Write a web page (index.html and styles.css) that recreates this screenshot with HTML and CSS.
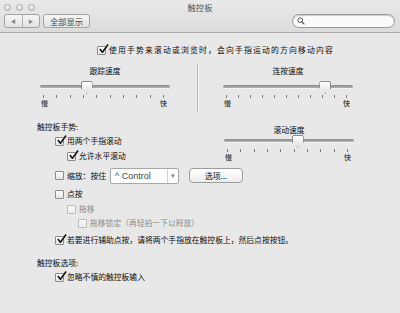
FILE: index.html
```html
<!DOCTYPE html>
<html lang="zh-CN">
<head>
<meta charset="UTF-8" />
<title>触控板</title>
<link rel="stylesheet" href="styles.css">
</head>
<body>

<div class="window">
  <!-- Title bar + toolbar -->
  <div class="titlebar">
    <div class="title-row">
      <div class="lights"><span></span><span></span><span></span></div>
      <div class="title">触控板</div>
      <div></div>
    </div>
    <div class="toolbar">
      <div class="seg">
        <span class="seg-btn">&#9664;</span>
        <span class="seg-btn">&#9654;</span>
      </div>
      <div class="tbtn">全部显示</div>
      <div class="search">
        <svg width="8" height="8" viewBox="0 0 8 8"><circle cx="3.2" cy="3.2" r="2.4" fill="none" stroke="#555" stroke-width="1"/><path d="M5 5 L7.4 7.4" stroke="#555" stroke-width="1.3"/></svg>
      </div>
    </div>
  </div>

  <div class="content">
    <div class="check top-check">
      <span class="box on"><svg viewBox="0 0 12 12"><path d="M2 5.5 L4.8 9 L11 0.5"/></svg></span>
      使用手势来滚动或浏览时，会向手指运动的方向移动内容
    </div>

    <!-- Speed sliders -->
    <div class="speeds">
      <div class="slider-col">
        <div class="slider-title">跟踪速度</div>
        <div class="track"><span class="thumb" style="left: 35%"></span></div>
        <div class="ticks"><i></i><i></i><i></i><i></i><i></i><i></i><i></i><i></i><i></i><i></i></div>
        <div class="ends"><span>慢</span><span>快</span></div>
      </div>
      <div class="divider"></div>
      <div class="slider-col">
        <div class="slider-title">连按速度</div>
        <div class="track"><span class="thumb" style="left: 78%"></span></div>
        <div class="ticks"><i></i><i></i><i></i><i></i><i></i><i></i><i></i><i></i><i></i><i></i><i></i></div>
        <div class="ends"><span>慢</span><span>快</span></div>
      </div>
    </div>

    <!-- Gestures -->
    <div class="gestures">
      <div class="g-left">
        <div class="heading">触控板手势:</div>
        <div class="check lvl1 first">
          <span class="box on"><svg viewBox="0 0 12 12"><path d="M2 5.5 L4.8 9 L11 0.5"/></svg></span>
          用两个手指滚动
        </div>
        <div class="check lvl2 next">
          <span class="box on"><svg viewBox="0 0 12 12"><path d="M2 5.5 L4.8 9 L11 0.5"/></svg></span>
          允许水平滚动
        </div>
      </div>
      <div class="slider-col compact">
        <div class="slider-title">滚动速度</div>
        <div class="track"><span class="thumb" style="left: 56%"></span></div>
        <div class="ticks"><i></i><i></i><i></i><i></i><i></i><i></i><i></i><i></i><i></i><i></i></div>
        <div class="ends"><span>慢</span><span>快</span></div>
      </div>
    </div>

    <div class="zoom-row">
      <div class="check lvl1">
        <span class="box"></span>
        缩放：按住
      </div>
      <div class="popup">
        <span class="popup-text">^ Control</span>
        <span class="popup-arrow">&#9662;</span>
      </div>
      <div class="btn">选项...</div>
    </div>

    <div class="check lvl1 row-click">
      <span class="box"></span>
      点按
    </div>
    <div class="check lvl2 off row-drag">
      <span class="box"></span>
      拖移
    </div>
    <div class="check lvl3 off row-lock">
      <span class="box"></span>
      拖移锁定（再轻拍一下以释放）
    </div>
    <div class="check lvl1 row-second">
      <span class="box on"><svg viewBox="0 0 12 12"><path d="M2 5.5 L4.8 9 L11 0.5"/></svg></span>
      若要进行辅助点按，请将两个手指放在触控板上，然后点按按钮。
    </div>

    <div class="heading options-heading">触控板选项:</div>
    <div class="check lvl1 row-ignore">
      <span class="box on"><svg viewBox="0 0 12 12"><path d="M2 5.5 L4.8 9 L11 0.5"/></svg></span>
      忽略不慎的触控板输入
    </div>
  </div>
</div>

</body>
</html>
```

FILE: styles.css
```css
body {
  margin: 0;
  padding: 0;
  font-family: "Noto Sans CJK SC", "Liberation Sans", sans-serif;
  font-size: 7.8px;
  color: #0c0c0c;
  background: #e8e8e8;
}
.window {
  width: 400px;
  height: 313px;
  overflow: hidden;
  background: #e8e8e8;
}

/* Title bar */
.titlebar {
  height: 32px;
  background: linear-gradient(#e9e9e9, #dcdcdc);
  border-bottom: 1px solid #a6a6a6;
}
.title-row {
  display: grid;
  grid-template-columns: 1fr auto 1fr;
  align-items: center;
  height: 13px;
}
.lights {
  display: flex;
  gap: 5px;
  padding-left: 4px;
  padding-top: 1px;
}
.lights span {
  width: 5px;
  height: 5px;
  border-radius: 50%;
  border: 1px solid #a4a4a4;
  background: linear-gradient(#f4f4f4, #dadada);
}
.title {
  font-size: 8.3px;
  line-height: 11px;
  color: #555;
  padding-top: 1px;
}
.toolbar {
  display: flex;
  align-items: center;
  padding: 1px 5px 0 4px;
}
.seg {
  display: flex;
  width: 34px;
  height: 12px;
  border: 1px solid #a3a3a3;
  border-radius: 3px;
  background: linear-gradient(#f6f6f6, #e2e2e2);
}
.seg-btn {
  flex: 1;
  font-size: 5px;
  line-height: 12px;
  text-align: center;
  color: #8a8a8a;
}
.seg-btn + .seg-btn {
  border-left: 1px solid #b4b4b4;
}
.tbtn {
  margin-left: 3px;
  width: 45px;
  height: 12px;
  border: 1px solid #a3a3a3;
  border-radius: 3px;
  background: linear-gradient(#f6f6f6, #e2e2e2);
  font-size: 8.3px;
  line-height: 12px;
  text-align: center;
  color: #444;
}
.search {
  margin-left: auto;
  width: 97px;
  height: 12px;
  border: 1px solid #9a9a9a;
  border-radius: 7px;
  background: #fbfbfb;
  box-shadow: inset 0 1px 1px #c8c8c8;
  display: flex;
  align-items: center;
  padding-left: 4px;
  box-sizing: content-box;
}

/* Content */
.content {
  padding-top: 11px;
}
.check {
  display: flex;
  align-items: center;
  height: 12px;
  line-height: 12px;
  white-space: nowrap;
}
.box {
  position: relative;
  flex: none;
  width: 7px;
  height: 7px;
  margin-right: 3px;
  border: 1px solid #8c8c8c;
  border-radius: 1px;
  background: linear-gradient(#ffffff, #e4e4e4);
}
.box svg {
  position: absolute;
  left: 0;
  top: -3px;
  width: 11px;
  height: 11px;
}
.box svg path {
  fill: none;
  stroke: #111;
  stroke-width: 1.7;
  stroke-linejoin: round;
}
.top-check {
  padding-left: 97px;
  letter-spacing: 1.2px;
}
.lvl1 { padding-left: 55px; }
.lvl2 { padding-left: 67px; }
.lvl3 { padding-left: 78px; }
.off { color: #8e8e8e; }
.off .box {
  border-color: #bcbcbc;
  background: linear-gradient(#fafafa, #ededed);
}

/* Sliders */
.speeds {
  display: flex;
  margin-top: 9px;
  padding-left: 30px;
}
.divider {
  width: 1px;
  height: 48px;
  margin: -1px 15px 0 17px;
  background: #b6b6b6;
  box-shadow: 1px 0 0 #f6f6f6;
}
.slider-col {
  width: 150px;
}
.slider-title {
  text-align: center;
  height: 12px;
  line-height: 12px;
  margin-bottom: 8px;
}
.compact .slider-title {
  margin-bottom: 3px;
}
.track {
  position: relative;
  margin: 0 10px;
  height: 3px;
  border-radius: 2px;
  background: linear-gradient(#8a8a8a, #b4b4b4);
  box-shadow: 0 1px 0 #f4f4f4;
}
.thumb {
  position: absolute;
  top: -4px;
  width: 10px;
  height: 11px;
  margin-left: -5px;
  background: linear-gradient(#ffffff, #dedede);
  border: 1px solid #8a8a8a;
  border-radius: 2px 2px 0 0;
  clip-path: polygon(0 0, 100% 0, 100% 55%, 50% 100%, 0 55%);
}
.ticks {
  display: flex;
  justify-content: space-between;
  margin: 7px 16px 0 13px;
  height: 3px;
}
.ticks i {
  width: 1px;
  background: #7c7c7c;
}
.ends {
  display: flex;
  justify-content: space-between;
  margin: 1px 13px 0 11px;
  font-size: 7px;
  line-height: 8px;
}

/* Gestures */
.gestures {
  display: flex;
  margin-top: 9px;
}
.g-left {
  width: 214px;
}
.gestures .slider-col {
  padding-top: 3px;
}
.heading {
  padding-left: 37px;
  height: 12px;
  line-height: 12px;
}
.first { margin-top: 2px; }
.next { margin-top: 3px; }

.zoom-row {
  display: flex;
  align-items: center;
  margin-top: 6px;
  height: 15px;
}
.popup {
  display: flex;
  margin-left: 4px;
  width: 67px;
  height: 14px;
  border: 1px solid #a8a8a8;
  border-radius: 2px;
  background: #fff;
  font-family: "Liberation Sans", sans-serif;
  font-size: 9px;
  line-height: 14px;
  color: #444;
}
.popup-text {
  flex: 1;
  padding-left: 4px;
}
.popup-arrow {
  width: 10px;
  border-left: 1px solid #cfcfcf;
  text-align: center;
  font-size: 7px;
  color: #777;
}
.btn {
  margin-left: 10px;
  width: 52px;
  height: 13px;
  border: 1px solid #9c9c9c;
  border-radius: 4px;
  background: linear-gradient(#ffffff, #ececec);
  text-align: center;
  line-height: 13px;
}
.row-click { margin-top: 5px; }
.row-drag { margin-top: 3px; }
.row-lock { margin-top: 2px; }
.row-second { margin-top: 5px; }
.options-heading { margin-top: 11px; }
.row-ignore { margin-top: 2px; }
```
